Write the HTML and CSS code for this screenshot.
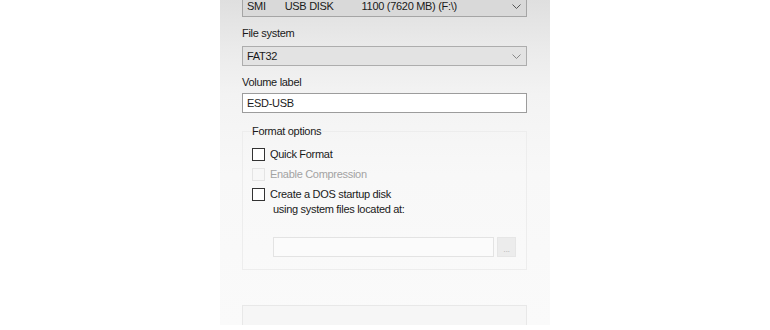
FILE: index.html
```html
<!DOCTYPE html>
<html lang="en">
<head>
    <meta charset="UTF-8">
    <meta name="viewport" content="width=device-width, initial-scale=1.0">
    <title>Format USB Disk</title>
    <link rel="stylesheet" href="styles.css">
</head>
<body>
    <div class="dialog">
        <div class="select select-device">
            <span class="dev-vendor">SMI</span>
            <span class="dev-name">USB DISK</span>
            <span class="dev-size">1100 (7620 MB) (F:\)</span>
            <svg class="chevron" width="9" height="5" viewBox="0 0 9 5"><polyline points="0.5,0.5 4.5,4.5 8.5,0.5" fill="none" stroke="#555" stroke-width="1"/></svg>
        </div>

        <div class="field-label">File system</div>
        <div class="select">
            <span>FAT32</span>
            <svg class="chevron" width="9" height="5" viewBox="0 0 9 5"><polyline points="0.5,0.5 4.5,4.5 8.5,0.5" fill="none" stroke="#888" stroke-width="1"/></svg>
        </div>

        <div class="field-label">Volume label</div>
        <div class="textbox">ESD-USB</div>

        <fieldset class="group">
            <legend>Format options</legend>
            <div class="check-row"><span class="check-box"></span>Quick Format</div>
            <div class="check-row disabled"><span class="check-box"></span>Enable Compression</div>
            <div class="check-row"><span class="check-box"></span>Create a DOS startup disk</div>
            <div class="check-note">using system files located at:</div>
            <div class="path-row">
                <div class="path-input"></div>
                <div class="browse-button">...</div>
            </div>
        </fieldset>

        <div class="status-bar"></div>
    </div>
</body>
</html>
```

FILE: styles.css
```css
body {
    margin: 0;
    padding: 0;
    background-color: #ffffff;
    font-family: "Liberation Sans", Arial, sans-serif;
    font-size: 11px;
    letter-spacing: -0.3px;
    color: #1a1a1a;
    overflow: hidden;
}
.dialog {
    width: 330px;
    height: 330px;
    margin: 0 auto;
    padding: 0 23px 0 22px;
    box-sizing: border-box;
    background: linear-gradient(#dedede 0, #ebebeb 55px, #f3f3f3 100px, #f8f8f8 180px, #fafafa 330px);
}
.select {
    height: 20px;
    box-sizing: border-box;
    border: 1px solid #adadad;
    background-color: #e3e3e3;
    display: flex;
    align-items: center;
    padding: 0 5px 0 4px;
    margin-top: 6px;
}
.select .chevron {
    margin-left: auto;
}
.select-device {
    height: 22px;
    margin-top: -5px;
    background-color: #d9d9d9;
    border-color: #a5a5a5;
    padding-left: 4px;
}
.dev-name {
    margin-left: 19px;
}
.dev-size {
    margin-left: 28px;
}
.field-label {
    line-height: 14px;
    margin-top: 9px;
}
.textbox {
    height: 20px;
    box-sizing: border-box;
    border: 1px solid #9c9c9c;
    background-color: #ffffff;
    padding: 0 4px;
    line-height: 18px;
    margin-top: 4px;
}
.group {
    margin: 11px 0 0 0;
    padding: 0 10px 12px 9px;
    border: 1px solid #ededed;
    min-width: 0;
}
.group legend {
    padding: 0 1px 0 0;
    line-height: 14px;
}
.check-row {
    height: 20px;
    display: flex;
    align-items: center;
    gap: 5px;
}
.check-row:first-of-type {
    margin-top: 6px;
}
.check-box {
    width: 13px;
    height: 13px;
    box-sizing: border-box;
    border: 1px solid #333;
    background-color: #ffffff;
}
.check-row.disabled {
    color: #a3a3a3;
}
.check-row.disabled .check-box {
    border-color: #e4e4e4;
    background-color: #f7f7f7;
}
.check-note {
    line-height: 14px;
    margin-top: -2px;
    padding-left: 21px;
}
.path-row {
    display: flex;
    gap: 3px;
    margin-top: 21px;
    padding-left: 21px;
}
.path-input {
    flex: 1;
    height: 20px;
    box-sizing: border-box;
    border: 1px solid #e3e3e3;
    background-color: #fbfbfb;
}
.browse-button {
    width: 19px;
    height: 20px;
    box-sizing: border-box;
    border: 1px solid #e6e6e6;
    background-color: #ececec;
    color: #bdbdbd;
    font-size: 9px;
    line-height: 22px;
    text-align: center;
}
.status-bar {
    height: 23px;
    box-sizing: border-box;
    margin-top: 35px;
    border: 1px solid #e8e8e8;
    background-color: #f6f6f6;
}
```
